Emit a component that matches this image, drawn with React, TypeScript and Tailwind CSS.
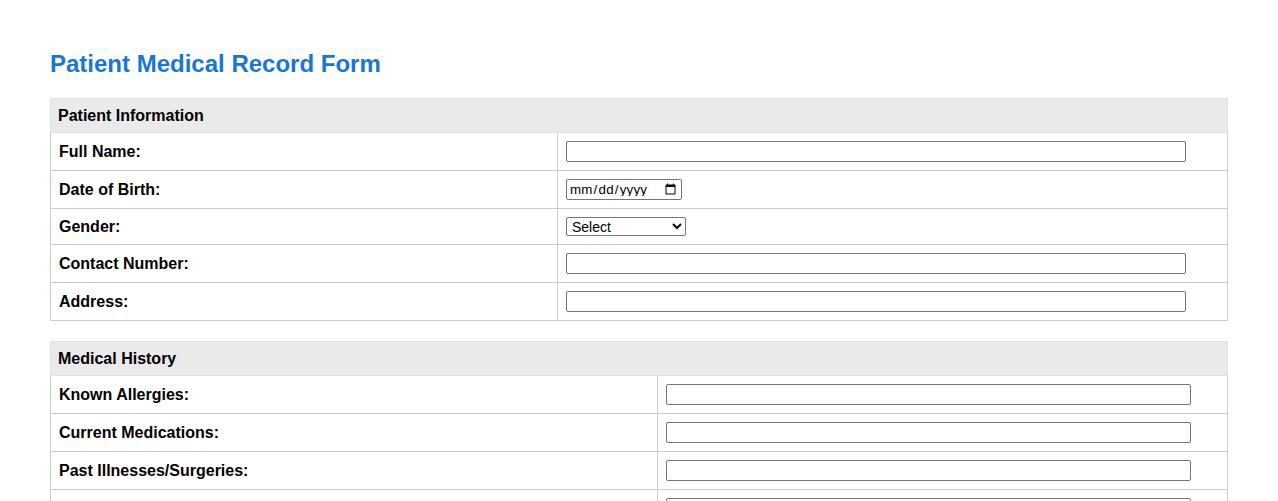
import React from 'react';

type Field = { label: string; type: 'text' | 'date' | 'select' };

const patientFields: Field[] = [
  { label: 'Full Name:', type: 'text' },
  { label: 'Date of Birth:', type: 'date' },
  { label: 'Gender:', type: 'select' },
  { label: 'Contact Number:', type: 'text' },
  { label: 'Address:', type: 'text' },
];

const historyFields: Field[] = [
  { label: 'Known Allergies:', type: 'text' },
  { label: 'Current Medications:', type: 'text' },
  { label: 'Past Illnesses/Surgeries:', type: 'text' },
  { label: 'Family Medical History:', type: 'text' },
  { label: 'Lifestyle Notes:', type: 'text' },
];

const inputBase = "border border-[#767676] rounded-[2px] bg-white text-[13.333px] font-normal text-black font-['Liberation_Sans',Arial,sans-serif]";

const FieldInput: React.FC<{ field: Field }> = ({ field }) => {
  if (field.type === 'date') {
    return <input type="date" className={`${inputBase} w-[116px] h-[21px] px-[2px] tracking-[0.2px]`} />;
  }
  if (field.type === 'select') {
    return (
      <select className={`${inputBase} w-[120px] h-[19px] pl-[1px] text-[14px]`} defaultValue="">
        <option value="">Select</option>
        <option>Male</option>
        <option>Female</option>
        <option>Other</option>
      </select>
    );
  }
  return <input type="text" className={`${inputBase} w-[95%] h-[21px] px-[2px] align-middle`} />;
};

const Section: React.FC<{ title: string; fields: Field[]; labelWidth: string }> = ({ title, fields, labelWidth }) => (
  <table className="w-full table-fixed border-collapse mb-[20px]">
    <colgroup>
      <col className={labelWidth} />
      <col />
    </colgroup>
    <thead>
      <tr>
        <th colSpan={2} className="bg-[#eaeaea] border border-[#e2e2e2] text-left pl-[7px] pr-[8px] py-[8px] text-[16px] font-bold leading-[17px]">
          {title}
        </th>
      </tr>
    </thead>
    <tbody>
      {fields.map((f) => (
        <tr key={f.label}>
          <td className="border border-[#cccccc] px-[8px] py-[8px] text-[16px] font-bold leading-[18px] align-middle">{f.label}</td>
          <td className="border border-[#cccccc] px-[8px] py-[8px] align-middle leading-none">
            <FieldInput field={f} />
          </td>
        </tr>
      ))}
    </tbody>
  </table>
);

const App: React.FC = () => {
  return (
    <div className="min-h-screen bg-white px-[50px] pt-[50px] text-black font-['Liberation_Sans',Arial,sans-serif]">
      <h2 className="text-[24px] leading-[28px] font-bold text-[#1976d2] mb-[20px]">Patient Medical Record Form</h2>
      <Section title="Patient Information" fields={patientFields} labelWidth="w-[507px]" />
      <Section title="Medical History" fields={historyFields} labelWidth="w-[607px]" />
    </div>
  );
};

export default App;
